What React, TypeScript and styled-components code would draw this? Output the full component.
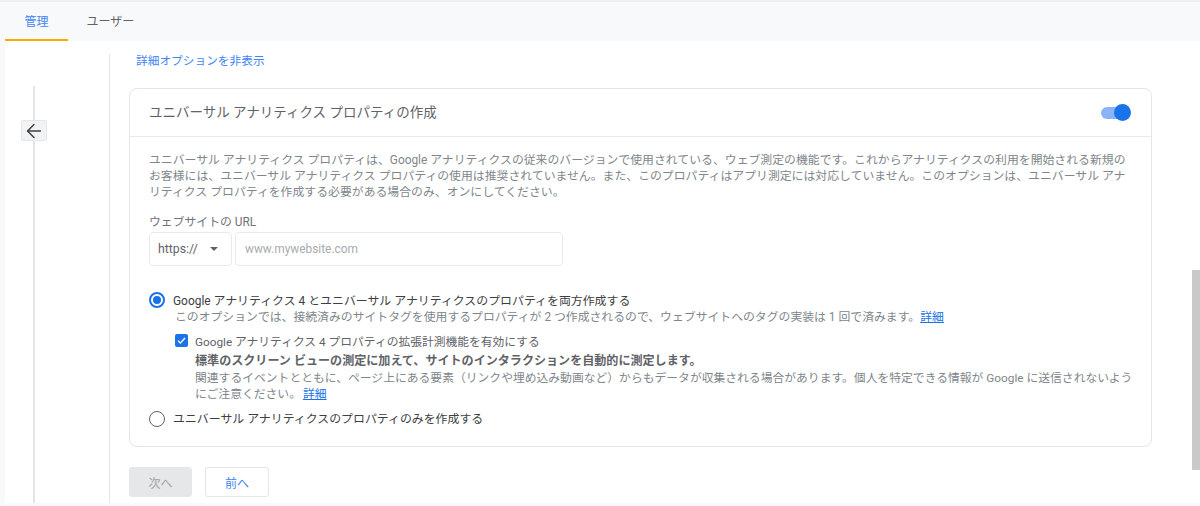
import styled, { createGlobalStyle } from "styled-components";
import { ArrowLeft } from "lucide-react";

const GlobalStyle = createGlobalStyle`
  html, body {
    margin: 0;
    padding: 0;
    background: #f8f9fa;
    font-family: Roboto, "Noto Sans CJK JP", "Liberation Sans", sans-serif;
    color: #5f6368;
  }
  * { box-sizing: border-box; }
`;

const Page = styled.div`
  width: 1200px;
  height: 506px;
  overflow: hidden;
  display: flex;
  flex-direction: column;
  background: #f8f9fa;
  border-top: 2px solid #eceef1;
`;

const TabBar = styled.div`
  height: 39px;
  flex: none;
  padding-left: 5px;
  display: flex;
`;

const Tab = styled.div<{ $active?: boolean }>`
  width: ${(p) => (p.$active ? "63px" : "85px")};
  display: flex;
  justify-content: center;
  align-items: center;
  font-size: 12px;
  color: ${(p) => (p.$active ? "#4285f4" : "#5f6368")};
  border-bottom: 2px solid ${(p) => (p.$active ? "#f9ab00" : "transparent")};
`;

const Main = styled.div`
  flex: 1;
  margin-left: 5px;
  margin-bottom: 3px;
  min-height: 0;
  background: #fff;
  display: flex;
`;

const Rail = styled.div`
  width: 104px;
  flex: none;
  padding: 45px 0 0 28px;
  position: relative;
`;

const RailLine = styled.div`
  width: 2px;
  height: 100%;
  background: #e3e5e8;
`;

const BackButton = styled.div`
  position: absolute;
  left: 16px;
  top: 79px;
  width: 26px;
  height: 21px;
  background: #f1f3f4;
  border: 1px solid #e4e6e8;
  border-radius: 2px;
  display: flex;
  align-items: center;
  justify-content: center;
  color: #3c4043;
`;

const Divider = styled.div`
  width: 1px;
  flex: none;
  margin-top: 13px;
  background: #e3e5e8;
`;

const Content = styled.div`
  width: 1042px;
  flex: none;
  padding: 12px 0 0 19px;
  display: flex;
  flex-direction: column;
`;

const OptionsLink = styled.div`
  margin-left: 7px;
  height: 16px;
  line-height: 16px;
  font-size: 11.7px;
  color: #4285f4;
`;

const Card = styled.div`
  margin-top: 19px;
  height: 359px;
  border: 1px solid #e3e5e8;
  border-radius: 8px;
  display: flex;
  flex-direction: column;
`;

const CardHeader = styled.div`
  height: 48px;
  flex: none;
  padding: 0 20px 0 19px;
  display: flex;
  align-items: center;
  justify-content: space-between;
  border-bottom: 1px solid #e8eaed;
  font-size: 13.5px;
  color: #5f6368;
`;

const CardTitle = styled.span`
  padding-bottom: 4px;
`;

const Toggle = styled.div`
  width: 30px;
  height: 18px;
  position: relative;
  &::before {
    content: "";
    position: absolute;
    left: 0;
    top: 3px;
    width: 26px;
    height: 12px;
    border-radius: 6px;
    background: #8ab4f8;
  }
  &::after {
    content: "";
    position: absolute;
    right: 0;
    top: 0;
    width: 17px;
    height: 17px;
    border-radius: 50%;
    background: #1a73e8;
  }
`;

const CardBody = styled.div`
  padding: 15px 10px 0 19px;
  display: flex;
  flex-direction: column;
`;

const Description = styled.p`
  margin: 0;
  font-size: 11.87px;
  line-height: 16px;
  color: #80868b;
`;

const FieldLabel = styled.div`
  margin-top: 14px;
  font-size: 11.85px;
  line-height: 16px;
  color: #6f7377;
`;

const UrlRow = styled.div`
  margin-top: 2px;
  display: flex;
  gap: 3px;
`;

const SelectBox = styled.div`
  width: 83px;
  height: 34px;
  padding: 0 13px 0 8px;
  border: 1px solid #e8eaed;
  border-radius: 4px;
  display: flex;
  align-items: center;
  justify-content: space-between;
  font-size: 12.3px;
  color: #5f6368;
  &::after {
    content: "";
    border-left: 4px solid transparent;
    border-right: 4px solid transparent;
    border-top: 4px solid #5f6368;
  }
`;

const UrlInput = styled.div`
  width: 328px;
  height: 34px;
  padding-left: 9px;
  border: 1px solid #e8eaed;
  border-radius: 4px;
  display: flex;
  align-items: center;
  font-size: 11.9px;
  color: #a8abaf;
`;

const RadioRow = styled.div<{ $top: number }>`
  margin-top: ${(p) => p.$top}px;
  display: flex;
  align-items: center;
  gap: 8px;
  height: 18px;
  font-size: 11.92px;
  color: #3c4043;
`;

const RadioLabel = styled.span`
  padding-bottom: 2px;
`;

const Radio = styled.span<{ $checked?: boolean }>`
  width: 16px;
  height: 16px;
  flex: none;
  border-radius: 50%;
  border: ${(p) => (p.$checked ? "2px solid #1a73e8" : "1.5px solid #5f6368")};
  display: flex;
  align-items: center;
  justify-content: center;
  &::after {
    content: "";
    display: ${(p) => (p.$checked ? "block" : "none")};
    width: 8px;
    height: 8px;
    border-radius: 50%;
    background: #1a73e8;
  }
`;

const Hint = styled.div`
  margin-left: 26px;
  font-size: 11.85px;
  line-height: 16px;
  color: #80868b;
`;

const DetailLink = styled.span<{ $gap: number }>`
  margin-left: ${(p) => p.$gap}px;
  color: #1a73e8;
  text-decoration: underline;
`;

const CheckRow = styled.div`
  margin: 7px 0 0 26px;
  display: flex;
  align-items: center;
  gap: 7px;
  height: 16px;
  font-size: 11.78px;
  color: #5f6368;
`;

const CheckBox = styled.span`
  width: 13px;
  height: 13px;
  flex: none;
  border-radius: 2px;
  background: #1a73e8;
  display: flex;
  align-items: center;
  justify-content: center;
`;

const Nested = styled.div`
  margin: 5px 0 0 46px;
  font-size: 11.8px;
  line-height: 16.5px;
  color: #80868b;
`;

const Strong = styled.div`
  font-weight: 700;
  font-size: 12.07px;
  color: #5f6368;
`;

const Actions = styled.div`
  margin-top: 20px;
  display: flex;
  gap: 13px;
`;

const ActionButton = styled.div<{ $disabled?: boolean }>`
  width: ${(p) => (p.$disabled ? "63px" : "64px")};
  height: 30px;
  border-radius: 3px;
  display: flex;
  align-items: center;
  justify-content: center;
  font-size: 12px;
  background: ${(p) => (p.$disabled ? "#e6e7e8" : "#fff")};
  color: ${(p) => (p.$disabled ? "#a2a4a6" : "#4285f4")};
  border: 1px solid ${(p) => (p.$disabled ? "#e6e7e8" : "#e3e5e8")};
`;

const ScrollTrack = styled.div`
  margin-left: auto;
  width: 8px;
  flex: none;
  padding-top: 229px;
`;

const ScrollThumb = styled.div`
  height: 200px;
  background: #c9c9c9;
`;

export default function App() {
  return (
    <>
      <GlobalStyle />
      <Page>
        <TabBar>
          <Tab $active>管理</Tab>
          <Tab>ユーザー</Tab>
        </TabBar>
        <Main>
          <Rail>
            <RailLine />
            <BackButton>
              <ArrowLeft size={22} strokeWidth={1.6} />
            </BackButton>
          </Rail>
          <Divider />
          <Content>
            <OptionsLink>詳細オプションを非表示</OptionsLink>
            <Card>
              <CardHeader>
                <CardTitle>ユニバーサル アナリティクス プロパティの作成</CardTitle>
                <Toggle />
              </CardHeader>
              <CardBody>
                <Description>
                  ユニバーサル アナリティクス プロパティは、Google アナリティクスの従来のバージョンで使用されている、ウェブ測定の機能です。これからアナリティクスの利用を開始される新規の
                  <br />
                  お客様には、ユニバーサル アナリティクス プロパティの使用は推奨されていません。また、このプロパティはアプリ測定には対応していません。このオプションは、ユニバーサル アナ
                  <br />
                  リティクス プロパティを作成する必要がある場合のみ、オンにしてください。
                </Description>
                <FieldLabel>ウェブサイトの URL</FieldLabel>
                <UrlRow>
                  <SelectBox>https://</SelectBox>
                  <UrlInput>www.mywebsite.com</UrlInput>
                </UrlRow>
                <RadioRow $top={25}>
                  <Radio $checked />
                  <RadioLabel>Google アナリティクス 4 とユニバーサル アナリティクスのプロパティを両方作成する</RadioLabel>
                </RadioRow>
                <Hint>
                  このオプションでは、接続済みのサイトタグを使用するプロパティが 2 つ作成されるので、ウェブサイトへのタグの実装は 1 回で済みます。
                  <DetailLink $gap={0}>詳細</DetailLink>
                </Hint>
                <CheckRow>
                  <CheckBox>
                    <svg width="11" height="11" viewBox="0 0 11 11" fill="none">
                      <path d="M2 5.6 L4.4 8 L9 3" stroke="#fff" strokeWidth="1.3" />
                    </svg>
                  </CheckBox>
                  Google アナリティクス 4 プロパティの拡張計測機能を有効にする
                </CheckRow>
                <Nested>
                  <Strong>標準のスクリーン ビューの測定に加えて、サイトのインタラクションを自動的に測定します。</Strong>
                  関連するイベントとともに、ページ上にある要素（リンクや埋め込み動画など）からもデータが収集される場合があります。個人を特定できる情報が Google に送信されないよう
                  <br />
                  にご注意ください。
                  <DetailLink $gap={2}>詳細</DetailLink>
                </Nested>
                <RadioRow $top={7}>
                  <Radio />
                  <RadioLabel>ユニバーサル アナリティクスのプロパティのみを作成する</RadioLabel>
                </RadioRow>
              </CardBody>
            </Card>
            <Actions>
              <ActionButton $disabled>次へ</ActionButton>
              <ActionButton>前へ</ActionButton>
            </Actions>
          </Content>
          <ScrollTrack>
            <ScrollThumb />
          </ScrollTrack>
        </Main>
      </Page>
    </>
  );
}
